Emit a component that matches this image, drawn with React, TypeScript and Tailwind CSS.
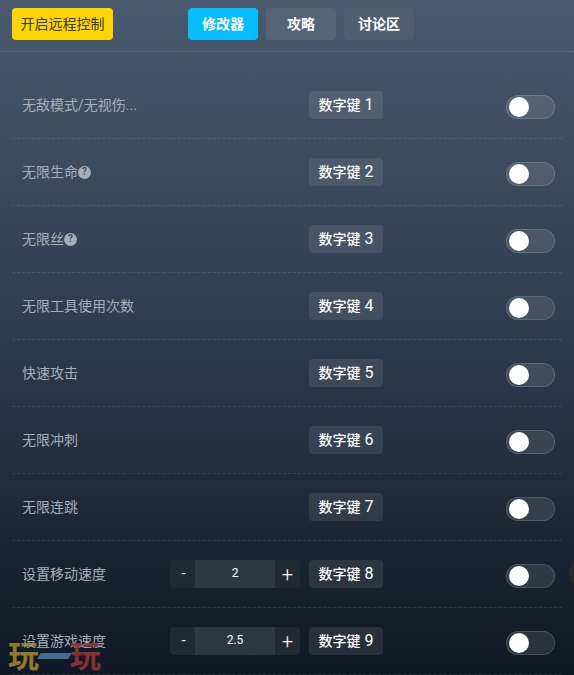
import React from 'react';

interface Cheat {
    name: string;
    keyNum: number;
    help?: boolean;
    stepper?: string;
}

const cheats: Cheat[] = [
    { name: '无敌模式/无视伤...', keyNum: 1 },
    { name: '无限生命', keyNum: 2, help: true },
    { name: '无限丝', keyNum: 3, help: true },
    { name: '无限工具使用次数', keyNum: 4 },
    { name: '快速攻击', keyNum: 5 },
    { name: '无限冲刺', keyNum: 6 },
    { name: '无限连跳', keyNum: 7 },
    { name: '设置移动速度', keyNum: 8, stepper: '2' },
    { name: '设置游戏速度', keyNum: 9, stepper: '2.5' },
];

const Row: React.FC<{ cheat: Cheat }> = ({ cheat }) => (
    <div className="flex h-[67px] items-center border-b border-dashed border-white/10 pl-[10px] pr-[7px]">
        <div className="flex w-[148px] items-center text-[14px] text-[#a5afba]">
            <span className="whitespace-nowrap">{cheat.name}</span>
            {cheat.help && (
                <span className="flex h-[13px] w-[13px] items-center justify-center rounded-full bg-[#a5afba] text-[10px] leading-none font-bold text-[#44505f]">?</span>
            )}
        </div>
        <div className="w-[139px]">
            {cheat.stepper && (
                <div className="mb-px flex h-7 w-[130px] overflow-hidden rounded bg-[#202a35] text-white">
                    <span className="flex w-[25px] items-center justify-center pl-0.5 text-[15px]">-</span>
                    <span className="flex w-20 items-center justify-center bg-[#2e3843] pb-0.5 text-[12px]">{cheat.stepper}</span>
                    <span className="flex w-[25px] items-center justify-center text-[20px] font-light">+</span>
                </div>
            )}
        </div>
        <div className="mb-px flex h-7 w-[74px] items-center justify-center rounded bg-white/[0.09] pt-px text-[14px] font-medium whitespace-nowrap text-white">
            数字键<span className="ml-[4px] text-[16px] font-normal">{cheat.keyNum}</span>
        </div>
        <div className="mt-[3px] ml-auto flex h-6 w-[49px] items-center rounded-full border border-white/15 bg-white/10 pl-0.5">
            <span className="h-5 w-5 rounded-full bg-white"></span>
        </div>
    </div>
);

const App: React.FC = () => {
    return (
        <div className="relative h-[675px] w-[574px] overflow-hidden bg-gradient-to-b from-[#4a5a6e] via-[#2d3c4e] to-[#0f1824] font-['Roboto','Noto_Sans_CJK_SC',sans-serif]">
            <div className="flex h-[52px] items-start border-b border-white/10 pt-2 pl-3">
                <button className="h-8 w-[101px] rounded bg-[#ffd500] text-[14px] text-[#3a3a1a]">开启远程控制</button>
                <div className="ml-[75px] flex gap-2">
                    <button className="h-8 w-[70px] rounded bg-[#06bdff] text-[14px] font-bold text-white">修改器</button>
                    <button className="h-8 w-[70px] rounded bg-[#566576] text-[14px] font-bold text-white">攻略</button>
                    <button className="h-8 w-[70px] rounded bg-[#505f70] text-[14px] font-bold text-white">讨论区</button>
                </div>
            </div>
            <div className="mx-3 pt-5">
                {cheats.map(c => <Row key={c.keyNum} cheat={c} />)}
            </div>
            <div className="absolute top-[556px] left-[569px] h-[34px] w-[34px] rounded-full bg-[#26282c]"></div>
            <div className="absolute top-[638px] left-[8px] flex h-[36px] items-center text-[31px] leading-none font-bold opacity-85">
                <span className="text-[#a88a2c]">玩</span>
                <span className="h-[6px] w-[31px] -skew-x-[30deg] bg-[#4a7ba6]"></span>
                <span className="text-[#9a3434]">玩</span>
            </div>
        </div>
    );
};

export default App;
